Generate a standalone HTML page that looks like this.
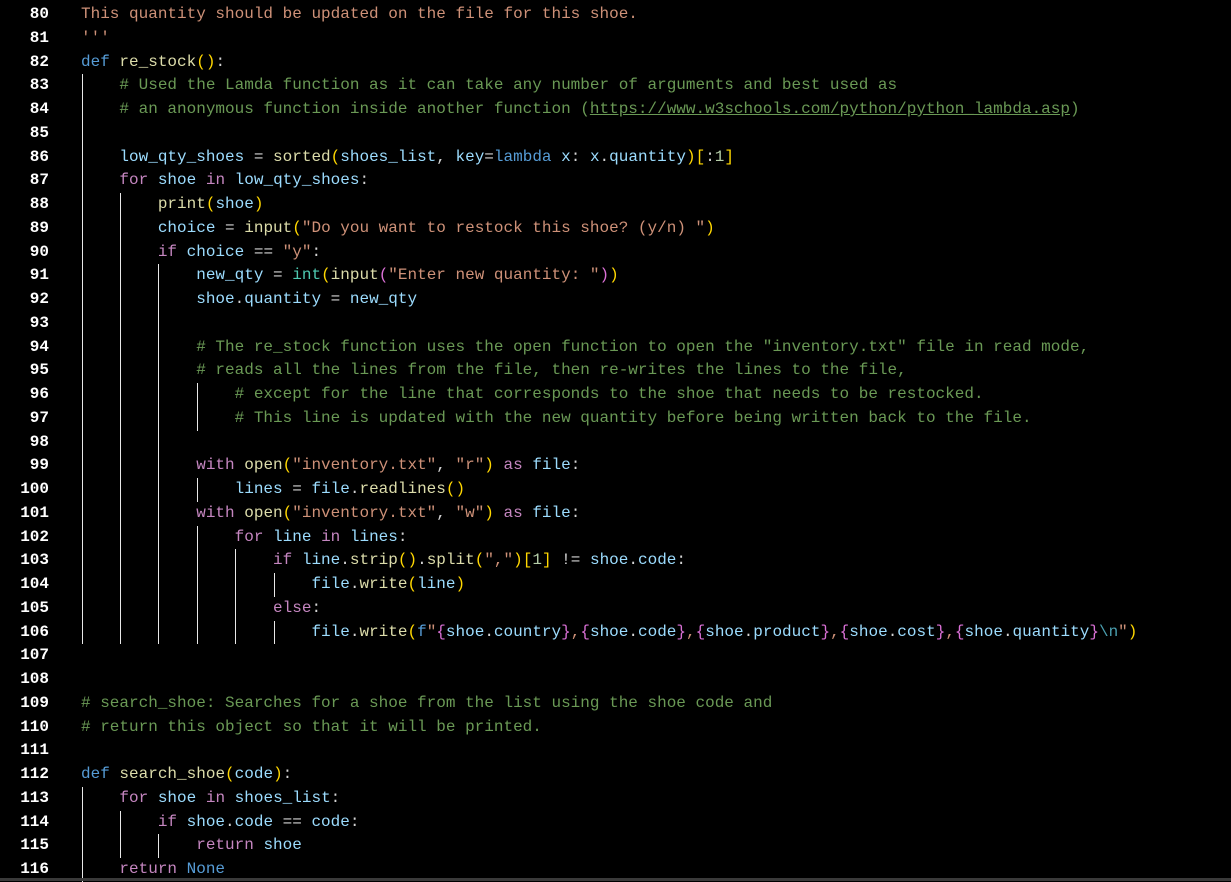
<!DOCTYPE html>
<html><head><meta charset="utf-8"><style>
body{margin:0;background:#000;width:1231px;height:881px;overflow:hidden;position:relative;font-family:"Liberation Mono",monospace;font-size:16px}
.l{position:absolute;left:0;height:23.75px;line-height:23.75px;white-space:pre;color:#d4d4d4}
.ln{position:absolute;left:0;width:49px;text-align:right;color:#fff;font-weight:bold}
.t{position:absolute;left:81px}
.g{position:absolute;top:0;width:1px;height:23.75px;background:#e8e8e8}
.k{color:#569cd6}.c{color:#c586c0}.v{color:#9cdcfe}.f{color:#dcdcaa}.s{color:#ce9178}.m{color:#6a9955}.y{color:#ffd700}.p{color:#da70d6}.b{color:#179fff}.n{color:#b5cea8}.e{color:#4a9fb0}.u{text-decoration:underline}
.bot{position:absolute;left:0;top:878px;width:1231px;height:3px;background:#3a3a3a}
</style></head><body>
<div id="c"></div>
<div class="bot"></div>
<script>
var L=[
[80,0,'<span class="s">This quantity should be updated on the file for this shoe.</span>'],
[81,0,'<span class="s">\'\'\'</span>'],
[82,0,'<span class="k">def</span> <span class="f">re_stock</span><span class="y">()</span>:'],
[83,1,'    <span class="m"># Used the Lamda function as it can take any number of arguments and best used as</span>'],
[84,1,'    <span class="m"># an anonymous function inside another function (<span class="u">https://www.w3schools.com/python/python_lambda.asp</span>)</span>'],
[85,1,''],
[86,1,'    <span class="v">low_qty_shoes</span> = <span class="f">sorted</span><span class="y">(</span><span class="v">shoes_list</span>, <span class="v">key</span>=<span class="k">lambda</span> <span class="v">x</span>: <span class="v">x</span>.<span class="v">quantity</span><span class="y">)</span><span class="y">[</span>:<span class="n">1</span><span class="y">]</span>'],
[87,1,'    <span class="c">for</span> <span class="v">shoe</span> <span class="c">in</span> <span class="v">low_qty_shoes</span>:'],
[88,2,'        <span class="f">print</span><span class="y">(</span><span class="v">shoe</span><span class="y">)</span>'],
[89,2,'        <span class="v">choice</span> = <span class="f">input</span><span class="y">(</span><span class="s">"Do you want to restock this shoe? (y/n) "</span><span class="y">)</span>'],
[90,2,'        <span class="c">if</span> <span class="v">choice</span> == <span class="s">"y"</span>:'],
[91,3,'            <span class="v">new_qty</span> = <span class="k" style="color:#4ec9b0">int</span><span class="y">(</span><span class="f">input</span><span class="p">(</span><span class="s">"Enter new quantity: "</span><span class="p">)</span><span class="y">)</span>'],
[92,3,'            <span class="v">shoe</span>.<span class="v">quantity</span> = <span class="v">new_qty</span>'],
[93,3,''],
[94,3,'            <span class="m"># The re_stock function uses the open function to open the "inventory.txt" file in read mode,</span>'],
[95,3,'            <span class="m"># reads all the lines from the file, then re-writes the lines to the file,</span>'],
[96,4,'                <span class="m"># except for the line that corresponds to the shoe that needs to be restocked.</span>'],
[97,4,'                <span class="m"># This line is updated with the new quantity before being written back to the file.</span>'],
[98,3,''],
[99,3,'            <span class="c">with</span> <span class="f">open</span><span class="y">(</span><span class="s">"inventory.txt"</span>, <span class="s">"r"</span><span class="y">)</span> <span class="c">as</span> <span class="v">file</span>:'],
[100,4,'                <span class="v">lines</span> = <span class="v">file</span>.<span class="f">readlines</span><span class="y">()</span>'],
[101,3,'            <span class="c">with</span> <span class="f">open</span><span class="y">(</span><span class="s">"inventory.txt"</span>, <span class="s">"w"</span><span class="y">)</span> <span class="c">as</span> <span class="v">file</span>:'],
[102,4,'                <span class="c">for</span> <span class="v">line</span> <span class="c">in</span> <span class="v">lines</span>:'],
[103,5,'                    <span class="c">if</span> <span class="v">line</span>.<span class="f">strip</span><span class="y">()</span>.<span class="f">split</span><span class="y">(</span><span class="s">","</span><span class="y">)</span><span class="y">[</span><span class="n">1</span><span class="y">]</span> != <span class="v">shoe</span>.<span class="v">code</span>:'],
[104,6,'                        <span class="v">file</span>.<span class="f">write</span><span class="y">(</span><span class="v">line</span><span class="y">)</span>'],
[105,5,'                    <span class="c">else</span>:'],
[106,6,'                        <span class="v">file</span>.<span class="f">write</span><span class="y">(</span><span class="k">f</span><span class="s">"</span><span class="p">{</span><span class="v">shoe</span>.<span class="v">country</span><span class="p">}</span><span class="s">,</span><span class="p">{</span><span class="v">shoe</span>.<span class="v">code</span><span class="p">}</span><span class="s">,</span><span class="p">{</span><span class="v">shoe</span>.<span class="v">product</span><span class="p">}</span><span class="s">,</span><span class="p">{</span><span class="v">shoe</span>.<span class="v">cost</span><span class="p">}</span><span class="s">,</span><span class="p">{</span><span class="v">shoe</span>.<span class="v">quantity</span><span class="p">}</span><span class="e">\\n</span><span class="s">"</span><span class="y">)</span>'],
[107,0,''],[108,0,''],
[109,0,'<span class="m"># search_shoe: Searches for a shoe from the list using the shoe code and</span>'],
[110,0,'<span class="m"># return this object so that it will be printed.</span>'],
[111,0,''],
[112,0,'<span class="k">def</span> <span class="f">search_shoe</span><span class="y">(</span><span class="v">code</span><span class="y">)</span>:'],
[113,1,'    <span class="c">for</span> <span class="v">shoe</span> <span class="c">in</span> <span class="v">shoes_list</span>:'],
[114,2,'        <span class="c">if</span> <span class="v">shoe</span>.<span class="v">code</span> == <span class="v">code</span>:'],
[115,3,'            <span class="c">return</span> <span class="v">shoe</span>'],
[116,1,'    <span class="c">return</span> <span class="k">None</span>']
];
var h='';
L.forEach(function(r){
 var top=3+(r[0]-80)*23.75;
 var g='';
 for(var i=0;i<r[1];i++)g+='<div class="g" style="left:'+(81.5+38.4*i).toFixed(1)+'px"></div>';
 h+='<div class="l" style="top:'+top+'px;width:1231px"><span class="ln">'+r[0]+'</span>'+g+'<span class="t">'+r[2]+'</span></div>';
});
document.getElementById('c').innerHTML=h;
</script>
</body></html>
